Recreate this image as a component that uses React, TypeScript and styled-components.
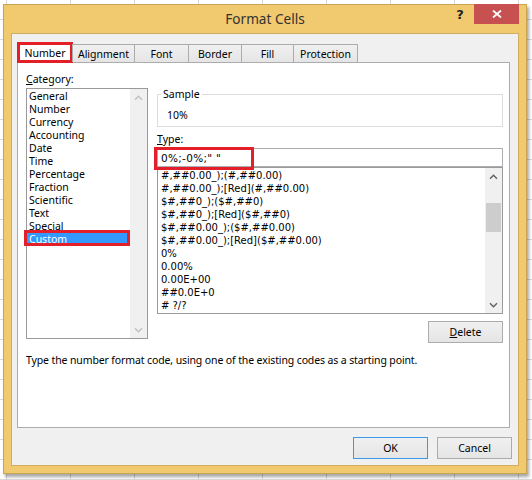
import React from 'react';
import styled, { createGlobalStyle } from 'styled-components';

const Global = createGlobalStyle`
  html, body { margin: 0; padding: 0; }
  body {
    width: 532px;
    height: 480px;
    overflow: hidden;
    background-color: #ffffff;
    background-image:
      linear-gradient(to right, #d9d9d9 1px, transparent 1px),
      linear-gradient(to bottom, #d9d9d9 1px, transparent 1px);
    background-size: 64px 20px;
    background-position: 6px -1px;
    font-family: "Noto Sans", "Open Sans", sans-serif;
  }
`;

const Page = styled.div`
  padding: 4px 0 0 3px;
`;

const Window = styled.div`
  width: 524px;
  height: 470px;
  box-sizing: border-box;
  border: 1px solid #c9a455;
  background: #f1c96e;
  display: flex;
  flex-direction: column;
  padding: 0 7px 7px 7px;
  box-shadow: 2px 3px 3px rgba(0, 0, 0, 0.35);
`;

const TitleBar = styled.div`
  height: 28px;
  display: grid;
  grid-template-columns: 1fr auto 1fr;
  align-items: start;
`;

const Title = styled.div`
  grid-column: 2;
  font-size: 13.6px;
  line-height: 28px;
  color: #333333;
`;

const Controls = styled.div`
  grid-column: 3;
  justify-self: end;
  display: flex;
  margin-top: -1px;
`;

const HelpButton = styled.div`
  width: 28px;
  height: 20px;
  display: flex;
  align-items: center;
  justify-content: center;
  font-family: "DejaVu Sans", sans-serif;
  font-weight: bold;
  font-size: 13px;
  color: #222222;
`;

const CloseButton = styled.div`
  width: 45px;
  height: 20px;
  background: #c75050;
  display: flex;
  align-items: center;
  justify-content: center;
`;

const Client = styled.div`
  flex: 1;
  background: #f0f0f0;
  border: 1px solid #d1ad62;
  display: flex;
  flex-direction: column;
  padding: 8px 8px 0 5px;
  font-size: 10.5px;
  color: #000000;
`;

const TabStrip = styled.div`
  display: flex;
  align-items: flex-end;
  position: relative;
  z-index: 1;
`;

const Tab = styled.div<{ $w: number; $active?: boolean }>`
  width: ${p => p.$w}px;
  box-sizing: border-box;
  margin-left: -1px;
  &:first-child { margin-left: 0; }
  display: flex;
  align-items: center;
  justify-content: center;
  border: 1px solid #acacac;
  border-bottom: none;
  height: ${p => (p.$active ? 21 : 18)}px;
  margin-bottom: ${p => (p.$active ? -1 : 0)}px;
  background: ${p => (p.$active ? '#ffffff' : 'linear-gradient(#f0f0f0, #e5e5e5)')};
  outline: ${p => (p.$active ? '3px solid #e3202a' : 'none')};
  outline-offset: -3px;
  line-height: 14px;
`;

const Panel = styled.div`
  width: 493px;
  height: 366px;
  box-sizing: border-box;
  border: 1px solid #acacac;
  background: #ffffff;
  padding: 9px 6px 0 8px;
  display: flex;
  flex-direction: column;
`;

const TopRow = styled.div`
  display: flex;
  gap: 9px;
  align-items: flex-start;
`;

const LeftCol = styled.div`
  width: 122px;
  display: flex;
  flex-direction: column;
`;

const RightCol = styled.div`
  flex: 1;
  display: flex;
  flex-direction: column;
  margin-top: 16px;
`;

const FieldLabel = styled.div<{ $mt?: number; $lh?: number }>`
  line-height: ${p => p.$lh ?? 14}px;
  height: ${p => p.$lh ?? 14}px;
  margin-top: ${p => p.$mt ?? 0}px;
`;

const ListBox = styled.div<{ $h: number; $mt?: number }>`
  height: ${p => p.$h}px;
  box-sizing: border-box;
  border: 1px solid #9a9a9a;
  margin-top: ${p => p.$mt ?? 0}px;
  display: flex;
  background: #ffffff;
`;

const Items = styled.div`
  flex: 1;
  padding-top: 1px;
  display: flex;
  flex-direction: column;
`;

const CategoryItem = styled.div<{ $selected?: boolean }>`
  height: 13px;
  line-height: 13px;
  padding-left: 2px;
  position: relative;
  background: ${p => (p.$selected ? '#3399ff' : 'transparent')};
  color: ${p => (p.$selected ? '#ffffff' : '#000000')};
  ${p =>
    p.$selected
      ? `&::after {
          content: '';
          position: absolute;
          left: -3px;
          top: -3px;
          right: 0;
          bottom: 0;
          border: 3px solid #e3202a;
          pointer-events: none;
        }`
      : ''}
`;

const FormatItem = styled.div`
  height: 13px;
  line-height: 13px;
  padding-left: 3px;
  font-family: "DejaVu Sans", sans-serif;
  font-size: 10px;
  white-space: nowrap;
`;

const ScrollBar = styled.div`
  width: 17px;
  background: #f0f0f0;
  display: flex;
  flex-direction: column;
`;

const ScrollArrow = styled.div`
  height: 17px;
  display: flex;
  align-items: center;
  justify-content: center;
`;

const Track = styled.div`
  flex: 1;
  display: flex;
  flex-direction: column;
`;

const Thumb = styled.div<{ $top: number; $h: number }>`
  margin: ${p => p.$top}px 1px 0 1px;
  height: ${p => p.$h}px;
  background: #cdcdcd;
`;

const SampleBox = styled.fieldset`
  margin: 0;
  padding: 0 0 4px 3px;
  border: 1px solid #dcdcdc;
  min-inline-size: 0;
`;

const SampleLegend = styled.legend`
  padding: 0 2px;
  line-height: 13px;
`;

const SampleValue = styled.div`
  margin: 7px 0 0 6px;
  line-height: 14px;
`;

const TypeField = styled.div`
  position: relative;
  margin-top: 2px;
  height: 19px;
  box-sizing: border-box;
  border: 1px solid #abadb3;
  padding-left: 3px;
  display: flex;
  align-items: center;
  font-family: "DejaVu Sans", sans-serif;
  font-size: 10.5px;
  letter-spacing: 0.3px;
`;

const Highlight = styled.span`
  position: absolute;
  left: -4px;
  top: -2px;
  width: 100px;
  height: 23px;
  box-sizing: border-box;
  border: 3px solid #e3202a;
  pointer-events: none;
`;

const Button = styled.div<{ $default?: boolean }>`
  width: 75px;
  height: 22px;
  box-sizing: border-box;
  border: 1px solid ${p => (p.$default ? '#3c98eb' : '#acacac')};
  background: linear-gradient(#f0f0f0, #e5e5e5);
  display: flex;
  align-items: center;
  justify-content: center;
  color: #000000;
`;

const DeleteRow = styled.div`
  display: flex;
  justify-content: flex-end;
  margin-top: 7px;
`;

const Description = styled.div`
  margin-top: 10px;
  line-height: 15px;
  letter-spacing: -0.12px;
`;

const ButtonRow = styled.div`
  display: flex;
  justify-content: flex-end;
  gap: 9px;
  margin-top: 9px;
  margin-right: -2px;
`;

const Chevron = ({ down, color }: { down?: boolean; color: string }) => (
  <svg width="9" height="6" viewBox="0 0 9 6">
    <path
      d={down ? 'M1 1.2 L4.5 4.7 L8 1.2' : 'M1 4.8 L4.5 1.3 L8 4.8'}
      fill="none"
      stroke={color}
      strokeWidth="1.4"
    />
  </svg>
);

const categories = [
  'General',
  'Number',
  'Currency',
  'Accounting',
  'Date',
  'Time',
  'Percentage',
  'Fraction',
  'Scientific',
  'Text',
  'Special',
  'Custom',
];

const formats = [
  '#,##0.00_);(#,##0.00)',
  '#,##0.00_);[Red](#,##0.00)',
  '$#,##0_);($#,##0)',
  '$#,##0_);[Red]($#,##0)',
  '$#,##0.00_);($#,##0.00)',
  '$#,##0.00_);[Red]($#,##0.00)',
  '0%',
  '0.00%',
  '0.00E+00',
  '##0.0E+0',
  '# ?/?',
];

const tabs = [
  { label: 'Number', w: 56, active: true },
  { label: 'Alignment', w: 63 },
  { label: 'Font', w: 55 },
  { label: 'Border', w: 54 },
  { label: 'Fill', w: 53 },
  { label: 'Protection', w: 65 },
];

export default function App() {
  return (
    <>
      <Global />
      <Page>
        <Window>
          <TitleBar>
            <Title>Format Cells</Title>
            <Controls>
              <HelpButton>?</HelpButton>
              <CloseButton>
                <svg width="10" height="8" viewBox="0 0 10 8">
                  <path d="M1 0.5 L9 7.5 M9 0.5 L1 7.5" stroke="#ffffff" strokeWidth="1.8" />
                </svg>
              </CloseButton>
            </Controls>
          </TitleBar>
          <Client>
            <TabStrip>
              {tabs.map(t => (
                <Tab key={t.label} $w={t.w} $active={t.active}>
                  {t.label}
                </Tab>
              ))}
            </TabStrip>
            <Panel>
              <TopRow>
                <LeftCol>
                  <FieldLabel $lh={15}>
                    <u>C</u>ategory:
                  </FieldLabel>
                  <ListBox $h={251} $mt={1}>
                    <Items>
                      {categories.map(c => (
                        <CategoryItem key={c} $selected={c === 'Custom'}>
                          {c}
                        </CategoryItem>
                      ))}
                    </Items>
                    <ScrollBar>
                      <ScrollArrow>
                        <Chevron color="#c0c0c0" />
                      </ScrollArrow>
                      <Track />
                      <ScrollArrow>
                        <Chevron down color="#c0c0c0" />
                      </ScrollArrow>
                    </ScrollBar>
                  </ListBox>
                </LeftCol>
                <RightCol>
                  <SampleBox>
                    <SampleLegend>Sample</SampleLegend>
                    <SampleValue>10%</SampleValue>
                  </SampleBox>
                  <FieldLabel $mt={5}>
                    <u>T</u>ype:
                  </FieldLabel>
                  <TypeField>
                    0%;-0%;&quot; &quot;
                    <Highlight />
                  </TypeField>
                  <ListBox $h={147}>
                    <Items>
                      {formats.map(f => (
                        <FormatItem key={f}>{f}</FormatItem>
                      ))}
                    </Items>
                    <ScrollBar>
                      <ScrollArrow>
                        <Chevron color="#606060" />
                      </ScrollArrow>
                      <Track>
                        <Thumb $top={18} $h={29} />
                      </Track>
                      <ScrollArrow>
                        <Chevron down color="#606060" />
                      </ScrollArrow>
                    </ScrollBar>
                  </ListBox>
                  <DeleteRow>
                    <Button>
                      <span>
                        <u>D</u>elete
                      </span>
                    </Button>
                  </DeleteRow>
                </RightCol>
              </TopRow>
              <Description>
                Type the number format code, using one of the existing codes as a starting point.
              </Description>
            </Panel>
            <ButtonRow>
              <Button $default>OK</Button>
              <Button>Cancel</Button>
            </ButtonRow>
          </Client>
        </Window>
      </Page>
    </>
  );
}
